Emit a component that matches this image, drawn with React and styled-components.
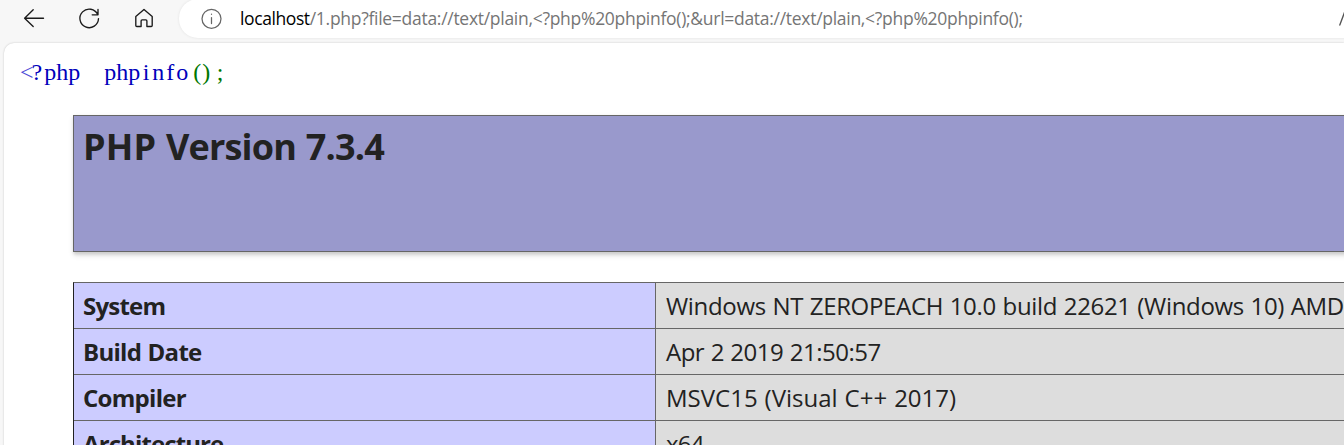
import React from "react";
import styled, { createGlobalStyle } from "styled-components";

const GlobalStyle = createGlobalStyle`
  html, body { margin: 0; padding: 0; overflow: hidden; background: #f7f7f7; }
  *, *::before, *::after { box-sizing: border-box; }
`;

const Browser = styled.div`
  display: flex;
  flex-direction: column;
  width: 1344px;
  height: 445px;
  overflow: hidden;
  background: #f7f7f7;
  font-family: "Open Sans", "Noto Sans", sans-serif;
`;

const Toolbar = styled.header`
  display: flex;
  flex: none;
  height: 38px;
`;

const NavButtons = styled.nav`
  display: flex;
  align-items: center;
  flex: none;
  width: 179px;
  padding: 0 0 2px 22px;
  gap: 31px;
`;

const Icon = styled.svg`
  display: block;
  flex: none;
  width: 24px;
  height: 24px;
  fill: none;
  stroke: ${(p) => p.$color || "#1b1b1b"};
  stroke-width: ${(p) => p.$weight || 1.35};
  stroke-linecap: round;
  stroke-linejoin: round;
`;

const AddressBar = styled.div`
  display: flex;
  align-items: center;
  flex: 1;
  margin-top: -1px;
  margin-right: -20px;
  padding: 0 0 1px 20px;
  background: #fff;
  border-radius: 19px 0 0 19px;
  box-shadow: 0 0 3px rgba(0, 0, 0, 0.09);
`;

const Url = styled.div`
  flex: 1;
  margin-left: 17px;
  color: #757575;
  font-size: 17.5px;
  line-height: 24px;
  letter-spacing: -0.285px;
  white-space: pre;
`;

const Host = styled.span`
  color: #000;
  letter-spacing: -0.4px;
`;

const ReadAloud = styled(Icon)`
  margin-right: 1px;
`;

const Page = styled.main`
  flex: 1;
  margin: 5px 0 0 4px;
  padding-top: 14px;
  background: #fff;
  border-radius: 10px 0 0 0;
  box-shadow: 0 0 2px rgba(0, 0, 0, 0.22);
`;

const Source = styled.code`
  display: block;
  height: 30px;
  margin-left: 16px;
  color: #0000bb;
  font-family: "Liberation Serif", serif;
  font-size: 24px;
  line-height: 30px;
  white-space: pre;
`;

const Glyph = styled.span`
  padding: 0 ${(p) => p.$right}px 0 ${(p) => p.$left}px;
`;

const Bracket = styled.span`
  color: #4a4ad6;
  letter-spacing: -2px;
`;

const Gap = styled.span`
  word-spacing: 6px;
`;

const Punctuation = styled.span`
  color: #007700;
`;

const Banner = styled.section`
  height: 137px;
  margin: 28px -20px 0 69px;
  padding: 6px 9px;
  background: #9999cc;
  border: 1px solid #666;
  box-shadow: 1px 2px 3px #ccc, 1px 3px 6px #ddd;
`;

const Title = styled.h1`
  margin: 0;
  color: #222;
  font-size: 36px;
  font-weight: 700;
  line-height: 50px;
  letter-spacing: -0.8px;
  word-spacing: 1px;
  white-space: nowrap;
`;

const Product = styled.span`
  letter-spacing: 0.2px;
`;

const InfoTable = styled.div`
  margin: 30px -20px 0 69px;
  border-top: 1px solid #666;
  border-left: 1px solid #222;
`;

const Row = styled.div`
  display: grid;
  grid-template-columns: 582px 1fr;
  height: 46px;
  border-bottom: 1px solid #666;
`;

const Cell = styled.div`
  padding-left: ${(p) => (p.$label ? 9 : 10)}px;
  background: ${(p) => (p.$label ? "#ccccff" : "#dddddd")};
  border-right: ${(p) => (p.$label ? "1px solid #666" : "0")};
  color: #222;
  font-size: 24px;
  font-weight: ${(p) => (p.$label ? 700 : 400)};
  line-height: 46px;
  letter-spacing: ${(p) => p.$spacing}px;
  word-spacing: 0.75px;
  white-space: nowrap;
  overflow: hidden;
`;

const rows = [
  ["System", -0.8, "Windows NT ZEROPEACH 10.0 build 22621 (Windows 10) AMD64", -0.33],
  ["Build Date", -0.7, "Apr 2 2019 21:50:57", -0.5],
  ["Compiler", -0.7, "MSVC15 (Visual C++ 2017)", 0],
  ["Architecture", -0.9, "x64", -0.8],
];

export default function App() {
  return (
    <Browser>
      <GlobalStyle />
      <Toolbar>
        <NavButtons>
          <Icon viewBox="0 0 24 24" aria-label="Back">
            <path d="M21.5 12.2H2.6M11.2 3.8 2.6 12.2l8.6 8.4" />
          </Icon>
          <Icon viewBox="0 0 24 24" aria-label="Refresh">
            <path d="M20.7 8.6A9.3 9.3 0 1 0 21.5 12.6M21 3.4v5.4h-5.8" />
          </Icon>
          <Icon viewBox="0 0 24 24" aria-label="Home">
            <path d="M3.8 10.6 12 3.4l8.2 7.2v8.9a1 1 0 0 1-1 1h-4.3v-5.6a1 1 0 0 0-1-1h-3.8a1 1 0 0 0-1 1v5.6H4.8a1 1 0 0 1-1-1z" />
          </Icon>
        </NavButtons>
        <AddressBar>
          <Icon viewBox="0 0 24 24" $color="#666" $weight={1.25} aria-label="Site information">
            <circle cx="12.5" cy="12.8" r="9.5" />
            <path d="M12.5 11.6v6M12.5 8v.3" />
          </Icon>
          <Url>
            <Host>localhost</Host>/1.php?file=data://text/plain,&lt;?php%20phpinfo();&amp;url=data://text/plain,&lt;?php%20phpinfo();
          </Url>
          <ReadAloud viewBox="0 0 24 24" $color="#555" aria-label="Read aloud">
            <path d="M.8 19 6 5l5.2 14" />
          </ReadAloud>
        </AddressBar>
      </Toolbar>
      <Page>
        <Source>
          <Bracket>&lt;</Bracket>
          <Glyph $left={0} $right={2}>?</Glyph>php<Gap>{"  "}</Gap>php<Glyph $left={2.66} $right={2.67}>i</Glyph>n<Glyph $left={2} $right={2}>f</Glyph>o
          <Punctuation>
            <Glyph $left={5} $right={0}>(</Glyph>
            <Glyph $left={1} $right={3}>)</Glyph>
            <Glyph $left={3.66} $right={0}>;</Glyph>
          </Punctuation>
        </Source>
        <Banner>
          <Title><Product>PHP</Product> Version 7.3.4</Title>
        </Banner>
        <InfoTable>
          {rows.map(([label, labelSpacing, value, valueSpacing]) => (
            <Row key={label}>
              <Cell $label $spacing={labelSpacing}>{label}</Cell>
              <Cell $spacing={valueSpacing}>{value}</Cell>
            </Row>
          ))}
        </InfoTable>
      </Page>
    </Browser>
  );
}
